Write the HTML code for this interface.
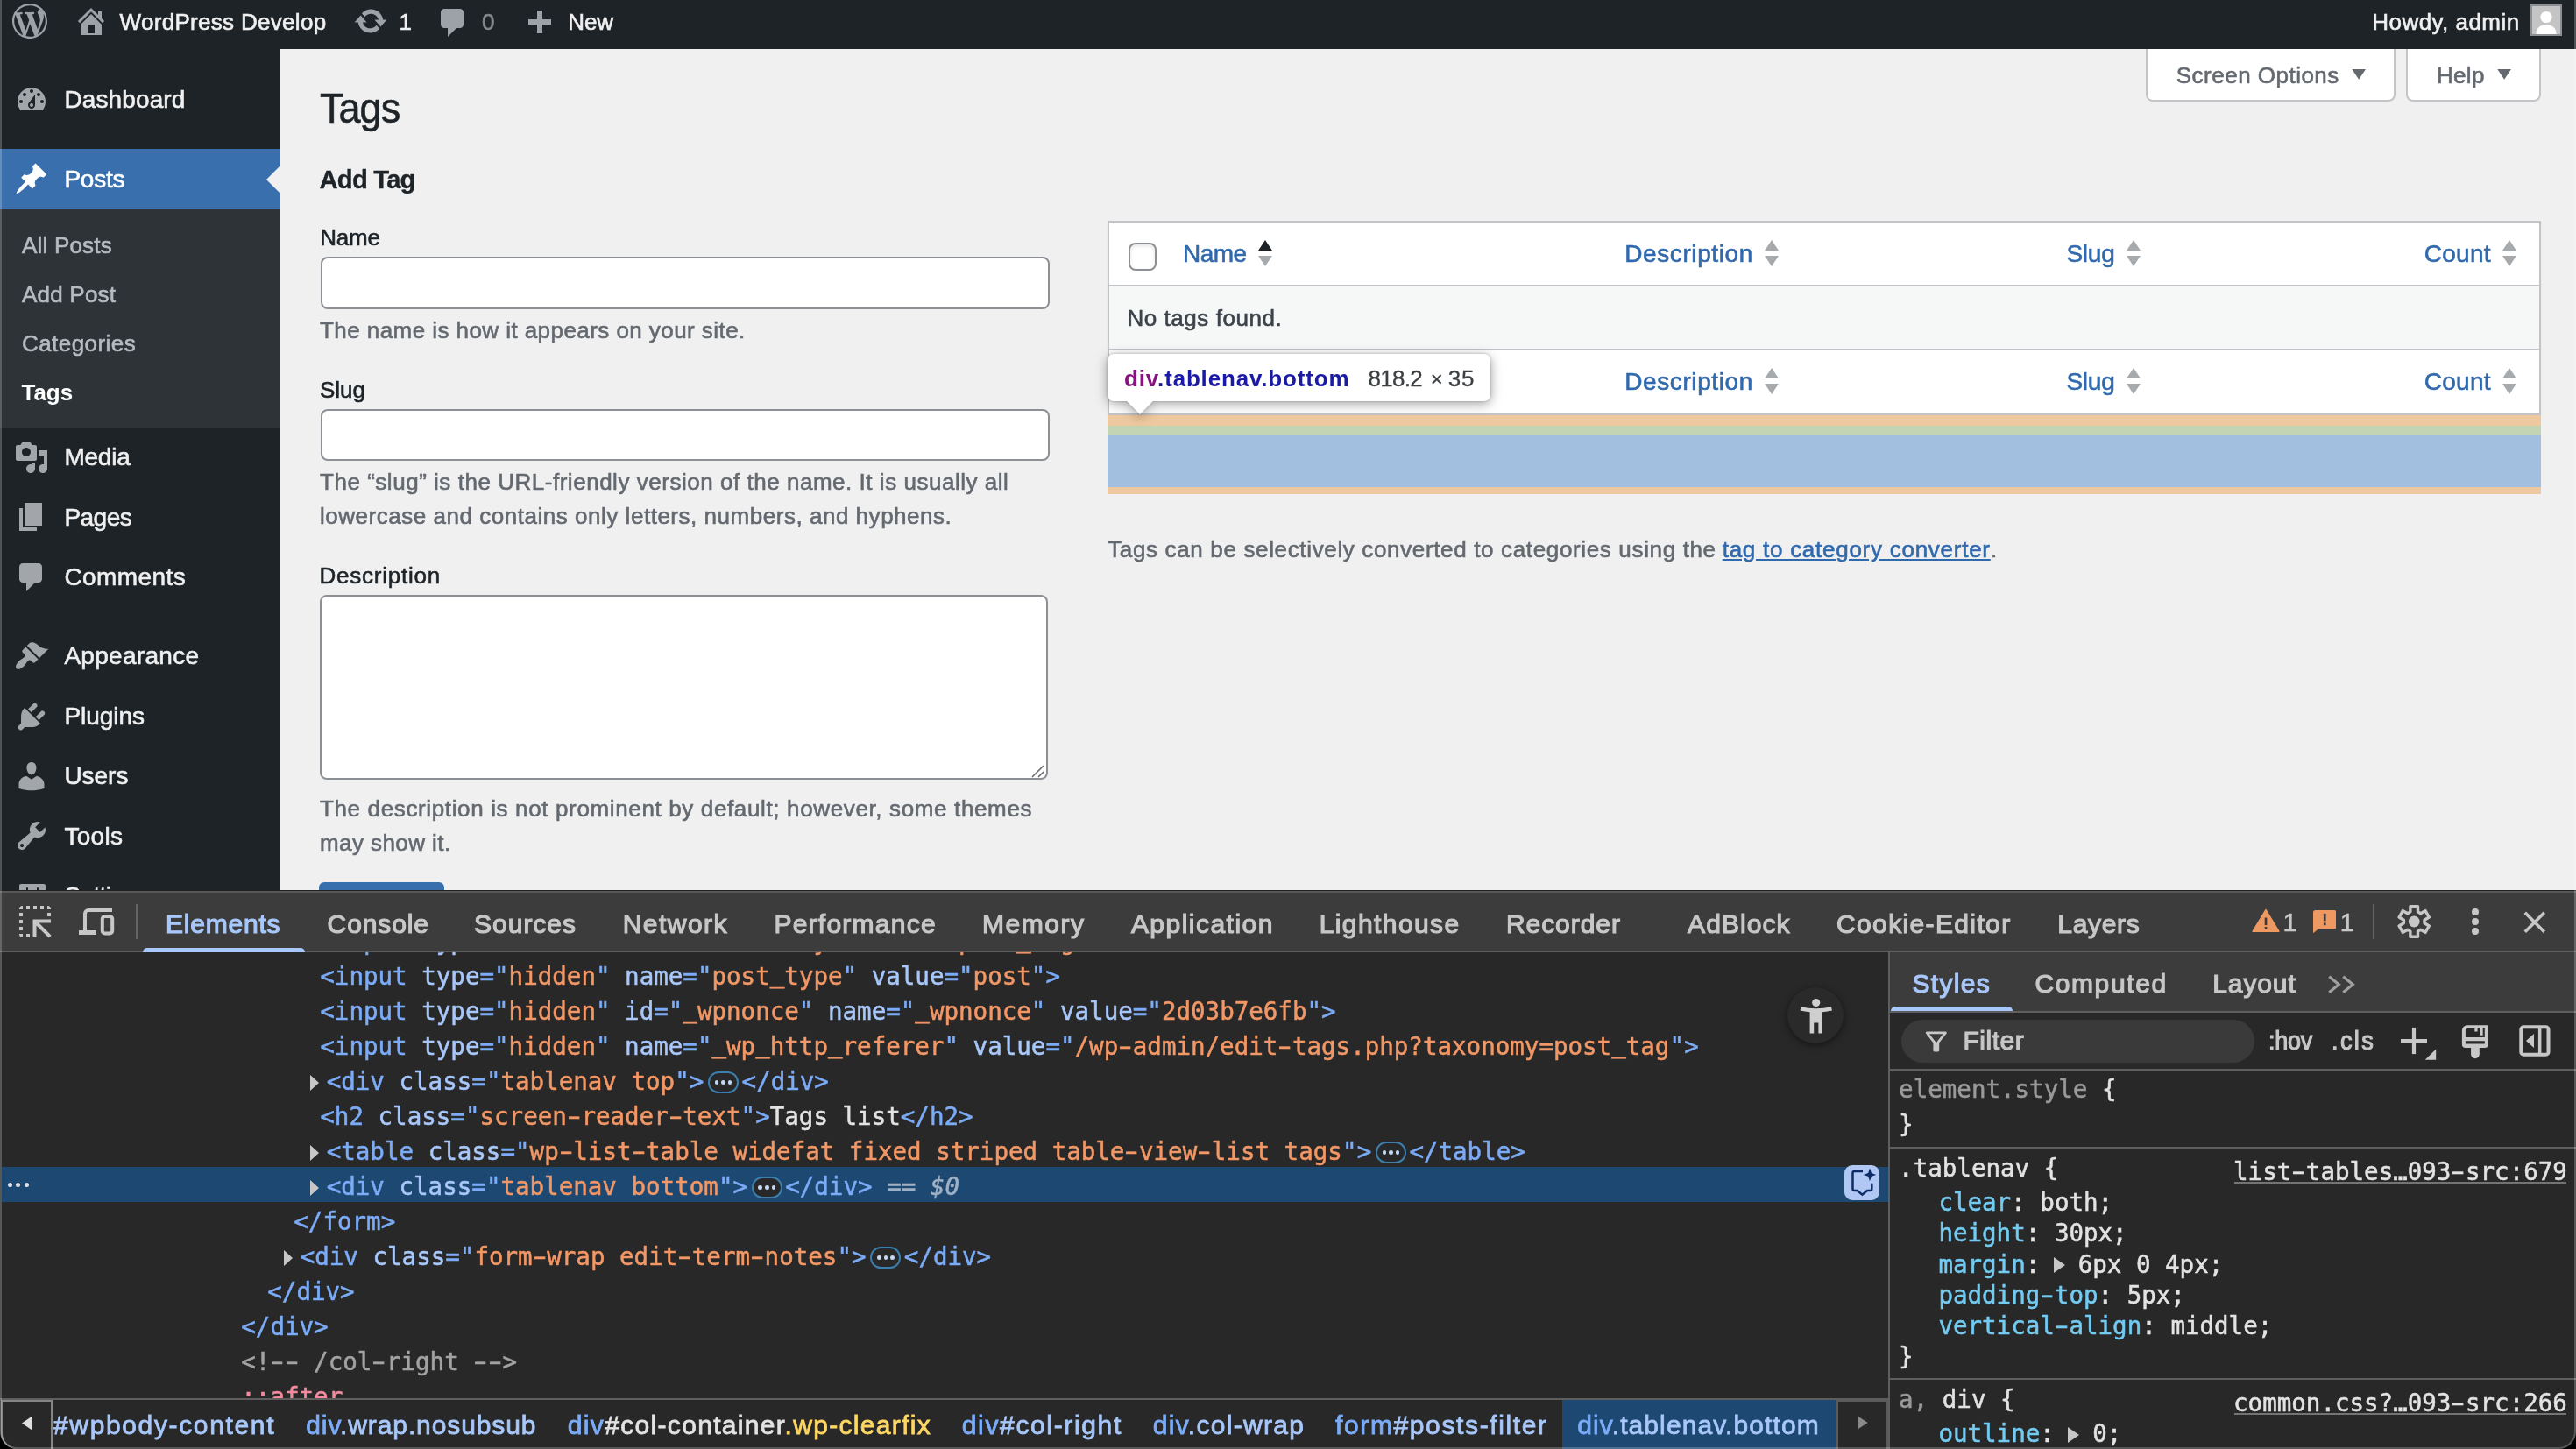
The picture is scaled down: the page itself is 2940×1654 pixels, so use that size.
<!DOCTYPE html>
<html lang="en"><head><meta charset="utf-8"><title>Tags ‹ WordPress Develop — WordPress</title>
<style>
html,body{margin:0;padding:0;}
body{width:2940px;height:1654px;overflow:hidden;position:relative;background:#f0f0f1;font-family:"Liberation Sans",sans-serif;}
.b{position:absolute;box-sizing:border-box;display:block;}
.t{position:absolute;white-space:pre;line-height:1;font-family:"Liberation Sans",sans-serif;}
.m{-webkit-text-stroke:0.5px;font-family:"DejaVu Sans Mono","Liberation Mono",monospace;}
.u{text-decoration:underline;}
.h{display:inline-block;transform:scaleX(1.65);}
.us{position:relative;top:-3px;}
#root{position:absolute;left:0;top:0;width:2940px;height:1654px;will-change:transform;}
</style></head>
<body>
<div id="root">
<div class="b" id="wp" style="left:0;top:0;width:2940px;height:1016px;overflow:hidden;background:#f0f0f1">
<div class="b" style="left:0px;top:56px;width:320px;height:960px;background:#1d2327;"></div>
<div class="b" style="left:0px;top:170.4px;width:320px;height:68.4px;background:#3a6fae;"></div>
<div class="b" style="left:0px;top:238.8px;width:320px;height:249.2px;background:#2d3337;"></div>
<div class="b" style="left:304px;top:188.600px;width:0;height:0;border:16px solid transparent;border-right-color:#f0f0f1;border-left-width:0"></div>
<svg class="b" style="left:16px;top:94px;" width="40" height="40" viewBox="0 0 20 20"><path fill="#a2a6ab" d="M3.76 16h12.48c1.1-1.37 1.76-3.11 1.76-5 0-4.42-3.58-8-8-8s-8 3.58-8 8c0 1.89.66 3.63 1.76 5zM10 4c.55 0 1 .45 1 1s-.45 1-1 1-1-.45-1-1 .45-1 1-1zM6 6c.55 0 1 .45 1 1s-.45 1-1 1-1-.45-1-1 .45-1 1-1zm8 0c.55 0 1 .45 1 1s-.45 1-1 1-1-.45-1-1 .45-1 1-1zm-5.37 5.55L12 7v6c0 1.1-.9 2-2 2s-2-.9-2-2c0-.57.24-1.08.63-1.45zM4 10c.55 0 1 .45 1 1s-.45 1-1 1-1-.45-1-1 .45-1 1-1zm12 0c.55 0 1 .45 1 1s-.45 1-1 1-1-.45-1-1 .45-1 1-1zm-5 3c0-.55-.45-1-1-1s-1 .45-1 1 .45 1 1 1 1-.45 1-1z"/></svg>
<span class="t" style="left:73.40px;top:100.20px;font-size:28px;color:#f0f0f1;letter-spacing:0.125px;-webkit-text-stroke:0.6px;">Dashboard</span>
<svg class="b" style="left:16px;top:184.4px;" width="40" height="40" viewBox="0 0 20 20"><path fill="#fff" d="M10.44 3.02l1.82-1.82 6.36 6.35-1.83 1.82c-1.05-.68-2.48-.57-3.41.36l-.75.75c-.92.93-1.04 2.35-.35 3.41l-1.83 1.82-2.41-2.41-2.8 2.79c-.42.42-3.38 2.71-3.8 2.29s1.86-3.39 2.28-3.81l2.79-2.79L4.1 9.36l1.83-1.82c1.05.69 2.48.57 3.4-.36l.75-.75c.93-.92 1.05-2.35.36-3.41z"/></svg>
<span class="t" style="left:73.40px;top:190.60px;font-size:28px;color:#fff;letter-spacing:-0.200px;-webkit-text-stroke:0.6px;">Posts</span>
<span class="t" style="left:25.00px;top:266.99px;font-size:26px;color:#b5bcc1;letter-spacing:0.200px;-webkit-text-stroke:0.6px;">All Posts</span>
<span class="t" style="left:25.00px;top:322.79px;font-size:26px;color:#b5bcc1;letter-spacing:0.214px;-webkit-text-stroke:0.6px;">Add Post</span>
<span class="t" style="left:25.00px;top:379.19px;font-size:26px;color:#b5bcc1;letter-spacing:0.444px;-webkit-text-stroke:0.6px;">Categories</span>
<span class="t" style="left:24.50px;top:434.99px;font-size:26px;color:#fff;letter-spacing:-0.033px;font-weight:700;">Tags</span>
<svg class="b" style="left:16px;top:502px;" width="40" height="40" viewBox="0 0 20 20"><path fill="#a2a6ab" d="M13 11V4c0-.55-.45-1-1-1h-1.67L9 1H5L3.67 3H2c-.55 0-1 .45-1 1v7c0 .55.45 1 1 1h10c.55 0 1-.45 1-1zM7 4.5c1.38 0 2.5 1.12 2.5 2.5S8.38 9.5 7 9.5 4.5 8.38 4.5 7 5.62 4.5 7 4.5zM14 6h5v10.5c0 1.38-1.12 2.5-2.5 2.5S14 17.88 14 16.5s1.12-2.500 2.5-2.500c.17 0 .34.02.5.05V9h-3V6zm-4 8.050V13h2v3.500c0 1.380-1.120 2.500-2.500 2.500S7 17.880 7 16.500 8.120 14 9.500 14c.170 0 .340.020.500.050z"/></svg>
<span class="t" style="left:73.40px;top:508.20px;font-size:28px;color:#f0f0f1;letter-spacing:-0.225px;-webkit-text-stroke:0.6px;">Media</span>
<svg class="b" style="left:16px;top:570.4px;" width="40" height="40" viewBox="0 0 20 20"><path fill="#a2a6ab" d="M6 15V2h10v13H6zm-1 1h8v2H3V5h2v11z"/></svg>
<span class="t" style="left:73.40px;top:576.60px;font-size:28px;color:#f0f0f1;letter-spacing:-0.525px;-webkit-text-stroke:0.6px;">Pages</span>
<svg class="b" style="left:16px;top:638.8px;" width="40" height="40" viewBox="0 0 20 20"><path fill="#a2a6ab" d="M5 2h9c1.1 0 2 .9 2 2v7c0 1.1-.9 2-2 2h-2l-5 5v-5H5c-1.1 0-2-.9-2-2V4c0-1.1.9-2 2-2z"/></svg>
<span class="t" style="left:73.40px;top:645.00px;font-size:28px;color:#f0f0f1;letter-spacing:0.414px;-webkit-text-stroke:0.6px;">Comments</span>
<svg class="b" style="left:16px;top:729.2px;" width="40" height="40" viewBox="0 0 20 20"><path fill="#a2a6ab" d="M14.48 11.06L7.41 3.99l1.5-1.5c.5-.56 2.3-.47 3.51.32 1.21.8 1.43 1.28 2.91 2.1 1.18.64 2.45 1.26 4.45.85zm-.71.71L6.7 4.7 4.93 6.47c-.39.39-.39 1.02 0 1.41l1.06 1.06c.39.39.39 1.03 0 1.42-.6.6-1.43 1.11-2.21 1.69-.35.26-.7.53-1.01.84C1.43 14.23.4 16.08 1.4 17.07c.99 1 2.84-.03 4.18-1.36.31-.31.58-.66.85-1.02.57-.78 1.08-1.61 1.69-2.21.39-.39 1.02-.39 1.41 0l1.06 1.06c.39.39 1.02.39 1.41 0z"/></svg>
<span class="t" style="left:73.40px;top:735.40px;font-size:28px;color:#f0f0f1;letter-spacing:0.289px;-webkit-text-stroke:0.6px;">Appearance</span>
<svg class="b" style="left:16px;top:797.6px;" width="40" height="40" viewBox="0 0 20 20"><path fill="#a2a6ab" d="M13.11 4.36L9.87 7.6 8 5.73l3.24-3.24c.35-.34 1.05-.2 1.56.32.52.51.66 1.21.31 1.55zm-8 1.77l.91-1.12 9.01 9.01-1.19.84c-.71.71-2.63 1.16-3.82 1.16H6.14L4.9 17.26c-.59.59-1.54.59-2.12 0-.59-.58-.59-1.53 0-2.12l1.24-1.24v-3.88c0-1.13.4-3.19 1.09-3.89zm7.26 3.97l3.24-3.24c.34-.35 1.04-.21 1.55.31.52.51.66 1.21.31 1.55l-3.24 3.25z"/></svg>
<span class="t" style="left:73.40px;top:803.80px;font-size:28px;color:#f0f0f1;letter-spacing:-0.033px;-webkit-text-stroke:0.6px;">Plugins</span>
<svg class="b" style="left:16px;top:866px;" width="40" height="40" viewBox="0 0 20 20"><path fill="#a2a6ab" d="M10 9.25c-2.27 0-2.73-3.44-2.73-3.44C7 4.02 7.82 2 9.97 2c2.16 0 2.98 2.02 2.71 3.81 0 0-.41 3.44-2.68 3.44zm0 2.57L12.72 10c2.39 0 4.52 2.33 4.52 4.53v2.49s-3.65 1.13-7.24 1.13c-3.65 0-7.24-1.13-7.24-1.13v-2.49c0-2.25 1.94-4.48 4.47-4.48z"/></svg>
<span class="t" style="left:73.40px;top:872.20px;font-size:28px;color:#f0f0f1;letter-spacing:-0.025px;-webkit-text-stroke:0.6px;">Users</span>
<svg class="b" style="left:16px;top:934.4px;" width="40" height="40" viewBox="0 0 20 20"><path fill="#a2a6ab" d="M16.68 9.77c-1.34 1.34-3.3 1.67-4.95.99l-5.41 6.52c-.99.99-2.59.99-3.58 0s-.99-2.59 0-3.57l6.52-5.42c-.68-1.65-.35-3.61.99-4.95 1.28-1.28 3.12-1.62 4.72-1.060l-2.890 2.890 2.820 2.820 2.860-2.870c.53 1.580.180 3.390-1.080 4.650zM3.810 16.210c.4.39 1.040.39 1.430 0 .4-.4.4-1.040 0-1.430-.39-.4-1.030-.4-1.430 0-.39.39-.39 1.030 0 1.430z"/></svg>
<span class="t" style="left:73.40px;top:940.60px;font-size:28px;color:#f0f0f1;letter-spacing:0.325px;-webkit-text-stroke:0.6px;">Tools</span>
<svg class="b" style="left:16px;top:1002.8px;" width="40" height="40" viewBox="0 0 20 20"><path fill="#a2a6ab" d="M18 16V4c0-.55-.45-1-1-1H4c-.55 0-1 .45-1 1v12c0 .55.45 1 1 1h13c.55 0 1-.45 1-1zM8 11h1c.55 0 1 .45 1 1s-.45 1-1 1H8v1.500c0 .28-.22.5-.5.5s-.5-.22-.5-.5V13H6c-.55 0-1-.45-1-1s.45-1 1-1h1V5.500c0-.28.22-.5.5-.5s.5.22.5.5V11zm5-2h-1c-.55 0-1-.45-1-1s.45-1 1-1h1V5.500c0-.28.22-.5.5-.5s.5.22.5.5V7h1c.55 0 1 .45 1 1s-.45 1-1 1h-1v5.500c0 .28-.22.5-.5.5s-.5-.22-.5-.5V9z"/></svg>
<span class="t" style="left:73.40px;top:1009.00px;font-size:28px;color:#f0f0f1;letter-spacing:-0.629px;-webkit-text-stroke:0.6px;">Settings</span>
<div class="b" style="left:0px;top:0px;width:2940px;height:56px;background:#1d2327;"></div>
<svg class="b" style="left:14px;top:4px;" width="40" height="40" viewBox="0 0 20 20"><path fill="#9ca2a7" d="M20 10c0-5.51-4.49-10-10-10C4.48 0 0 4.49 0 10c0 5.52 4.48 10 10 10 5.51 0 10-4.48 10-10zM7.78 15.37L4.37 6.22c.55-.02 1.17-.08 1.17-.08.5-.06.44-1.13-.06-1.11 0 0-1.45.11-2.37.11-.18 0-.37 0-.58-.01C4.12 2.69 6.87 1.11 10 1.11c2.33 0 4.45.87 6.05 2.34-.68-.11-1.65.39-1.65 1.58 0 .74.45 1.36.9 2.1.35.61.55 1.36.55 2.46 0 1.49-1.4 5-1.4 5l-3.03-8.37c.54-.02.82-.17.82-.17.5-.05.44-1.25-.06-1.22 0 0-1.44.12-2.38.12-.87 0-2.33-.12-2.33-.12-.5-.03-.56 1.2-.06 1.22l.92.08 1.26 3.41zM17.41 10c.24-.64.74-1.87.43-4.25.7 1.29 1.05 2.71 1.05 4.25 0 3.29-1.73 6.24-4.4 7.78.97-2.59 1.94-5.2 2.92-7.78zM6.1 18.09C3.12 16.65 1.11 13.53 1.11 10c0-1.3.23-2.48.72-3.59C3.25 10.3 4.67 14.2 6.1 18.09zm4.03-6.63l2.58 6.98c-.86.29-1.76.45-2.71.45-.79 0-1.57-.11-2.29-.33.81-2.38 1.62-4.74 2.42-7.1z"/></svg>
<svg class="b" style="left:84px;top:4px;" width="40" height="40" viewBox="0 0 20 20"><path fill="#9ca2a7" d="M16 8.5l1.53 1.53-1.06 1.06L10 4.62l-6.47 6.47-1.06-1.06L10 2.5l4 4v-2h2v4zm-6-2.46l6 5.99V18H4v-5.97zM12 17v-5H8v5h4z"/></svg>
<span class="t" style="left:136.60px;top:11.99px;font-size:26px;color:#f0f0f1;letter-spacing:0.300px;-webkit-text-stroke:0.6px;">WordPress Develop</span>
<svg class="b" style="left:402.6px;top:4px;" width="40" height="40" viewBox="0 0 20 20"><path fill="#9ca2a7" d="M10.2 3.28c3.53 0 6.43 2.61 6.92 6h2.08l-3.5 4-3.5-4h2.32c-.45-1.97-2.21-3.45-4.32-3.45-1.45 0-2.73.71-3.54 1.78L4.95 5.66C6.23 4.2 8.11 3.28 10.2 3.28zm-.4 13.44c-3.52 0-6.43-2.61-6.92-6H.8l3.5-4c1.17 1.33 2.33 2.67 3.5 4H5.48c.45 1.97 2.21 3.45 4.32 3.45 1.45 0 2.73-.71 3.54-1.78l1.71 1.95c-1.28 1.46-3.15 2.38-5.25 2.38z"/></svg>
<span class="t" style="left:455.50px;top:11.99px;font-size:26px;color:#f0f0f1;-webkit-text-stroke:0.6px;">1</span>
<svg class="b" style="left:497px;top:6px;" width="40" height="40" viewBox="0 0 20 20"><path fill="#9ca2a7" d="M5 2h9c1.1 0 2 .9 2 2v7c0 1.1-.9 2-2 2h-2l-5 5v-5H5c-1.1 0-2-.9-2-2V4c0-1.1.9-2 2-2z"/></svg>
<span class="t" style="left:550.00px;top:11.99px;font-size:26px;color:#86898c;-webkit-text-stroke:0.6px;">0</span>
<svg class="b" style="left:595px;top:8px;" width="40" height="40" viewBox="0 0 20 20"><path fill="#9ca2a7" d="M17 7v3h-5v5H9v-5H4V7h5V2h3v5h5z"/></svg>
<span class="t" style="left:648.30px;top:11.99px;font-size:26px;color:#f0f0f1;letter-spacing:-0.150px;-webkit-text-stroke:0.6px;">New</span>
<span class="t" style="left:2707.30px;top:11.99px;font-size:26px;color:#f0f0f1;letter-spacing:0.455px;-webkit-text-stroke:0.6px;">Howdy, admin</span>
<div class="b" style="left:2888px;top:5px;width:36px;height:36px;background:#c4c4c4;border:2px solid #8c8f94;overflow:hidden"><svg width="32" height="32" viewBox="0 0 32 32" style="display:block"><circle cx="16" cy="12.5" r="6.6" fill="#fff"/><path fill="#fff" d="M4.5 32c0-7 4.6-11 11.500-11s11.500 4 11.500 11z"/></svg></div>
<div class="b" style="left:2449px;top:56px;width:285px;height:60px;background:#fff;border:2px solid #c3c4c7;border-top:none;border-radius:0 0 8px 8px"></div>
<span class="t" style="left:2483.80px;top:72.79px;font-size:26px;color:#646970;letter-spacing:0.485px;-webkit-text-stroke:0.6px;">Screen Options</span>
<svg class="b" style="left:2684px;top:78.8px;" width="16.3" height="11.8" viewBox="0 0 16 12"><path fill="#646970" d="M0 0h16L8 12z"/></svg>
<div class="b" style="left:2746px;top:56px;width:154px;height:60px;background:#fff;border:2px solid #c3c4c7;border-top:none;border-radius:0 0 8px 8px"></div>
<span class="t" style="left:2780.90px;top:72.79px;font-size:26px;color:#646970;letter-spacing:0.333px;-webkit-text-stroke:0.6px;">Help</span>
<svg class="b" style="left:2849.8px;top:78.8px;" width="16.3" height="11.8" viewBox="0 0 16 12"><path fill="#646970" d="M0 0h16L8 12z"/></svg>
<span class="t" style="left:365.00px;top:98.94px;font-size:48.5px;color:#1d2327;letter-spacing:-1.097px;-webkit-text-stroke:0.6px;transform:scaleX(0.93);transform-origin:0 0;">Tags</span>
<span class="t" style="left:364.50px;top:190.40px;font-size:29.3px;color:#1d2327;letter-spacing:-0.833px;font-weight:700;-webkit-text-stroke:0.3px;">Add Tag</span>
<span class="t" style="left:365.20px;top:258.19px;font-size:26px;color:#1d2327;letter-spacing:-0.233px;-webkit-text-stroke:0.6px;">Name</span>
<div class="b" style="left:366px;top:293px;width:832px;height:60px;background:#fff;border:2px solid #8c8f94;border-radius:8px"></div>
<span class="t" style="left:365.00px;top:363.99px;font-size:26px;color:#646970;letter-spacing:0.436px;-webkit-text-stroke:0.6px;">The name is how it appears on your site.</span>
<span class="t" style="left:365.00px;top:431.79px;font-size:26px;color:#1d2327;letter-spacing:-0.033px;-webkit-text-stroke:0.6px;">Slug</span>
<div class="b" style="left:366px;top:466.5px;width:832px;height:59.4px;background:#fff;border:2px solid #8c8f94;border-radius:8px"></div>
<span class="t" style="left:365.00px;top:536.99px;font-size:26px;color:#646970;letter-spacing:0.528px;-webkit-text-stroke:0.6px;">The “slug” is the URL-friendly version of the name. It is usually all</span>
<span class="t" style="left:365.00px;top:575.99px;font-size:26px;color:#646970;letter-spacing:0.526px;-webkit-text-stroke:0.6px;">lowercase and contains only letters, numbers, and hyphens.</span>
<span class="t" style="left:364.50px;top:644.29px;font-size:26px;color:#1d2327;letter-spacing:0.770px;-webkit-text-stroke:0.6px;">Description</span>
<div class="b" style="left:364.5px;top:678.5px;width:831px;height:211px;background:#fff;border:2px solid #8c8f94;border-radius:8px"></div>
<svg class="b" style="left:1176px;top:872px;" width="16" height="16" viewBox="0 0 16 16"><path d="M2 15L15 2M9 15l6-6" stroke="#6b6b6b" stroke-width="1.6" fill="none"/></svg>
<span class="t" style="left:365.00px;top:909.99px;font-size:26px;color:#646970;letter-spacing:0.637px;-webkit-text-stroke:0.6px;">The description is not prominent by default; however, some themes</span>
<span class="t" style="left:365.00px;top:949.09px;font-size:26px;color:#646970;letter-spacing:0.427px;-webkit-text-stroke:0.6px;">may show it.</span>
<div class="b" style="left:364px;top:1007px;width:143px;height:64px;background:#3a6fae;border-radius:6px"></div>
<span class="t" style="left:392.00px;top:1025.99px;font-size:26px;color:#fff;-webkit-text-stroke:0.6px;">Add Tag</span>
<div class="b" style="left:1264px;top:252px;width:1636px;height:222px;background:#fff;border:2px solid #c3c4c7;box-shadow:0 2px 2px rgba(0,0,0,.04)"></div>
<div class="b" style="left:1266px;top:325px;width:1632px;height:2px;background:#c3c4c7;"></div>
<div class="b" style="left:1266px;top:327px;width:1632px;height:71px;background:#f6f7f7;"></div>
<div class="b" style="left:1266px;top:398px;width:1632px;height:2px;background:#c3c4c7;"></div>
<div class="b" style="left:1288px;top:277px;width:32px;height:32px;background:#fff;border:2px solid #8c8f94;border-radius:8px;box-shadow:inset 0 2px 4px rgba(0,0,0,.1)"></div>
<span class="t" style="left:1350.00px;top:275.50px;font-size:28px;color:#3169ad;letter-spacing:-0.567px;-webkit-text-stroke:0.6px;">Name</span>
<svg class="b" style="left:1436.3px;top:274px;" width="16" height="30" viewBox="0 0 16 30"><path fill="#1d2327" d="M8 0l8 12H0z"/><path fill="#a7aaad" d="M0 18h16L8 30z"/></svg>
<span class="t" style="left:1854.20px;top:275.50px;font-size:28px;color:#3169ad;letter-spacing:0.610px;-webkit-text-stroke:0.6px;">Description</span>
<svg class="b" style="left:2014px;top:274px;" width="16" height="30" viewBox="0 0 16 30"><path fill="#a7aaad" d="M8 0l8 12H0z"/><path fill="#a7aaad" d="M0 18h16L8 30z"/></svg>
<span class="t" style="left:2358.40px;top:275.50px;font-size:28px;color:#3169ad;letter-spacing:-0.233px;-webkit-text-stroke:0.6px;">Slug</span>
<svg class="b" style="left:2427.2px;top:274px;" width="16" height="30" viewBox="0 0 16 30"><path fill="#a7aaad" d="M8 0l8 12H0z"/><path fill="#a7aaad" d="M0 18h16L8 30z"/></svg>
<span class="t" style="left:2766.70px;top:275.50px;font-size:28px;color:#3169ad;letter-spacing:0.275px;-webkit-text-stroke:0.6px;">Count</span>
<svg class="b" style="left:2855.8px;top:274px;" width="16" height="30" viewBox="0 0 16 30"><path fill="#a7aaad" d="M8 0l8 12H0z"/><path fill="#a7aaad" d="M0 18h16L8 30z"/></svg>
<span class="t" style="left:1286.50px;top:349.99px;font-size:26px;color:#3c434a;letter-spacing:0.538px;-webkit-text-stroke:0.6px;">No tags found.</span>
<span class="t" style="left:1350.00px;top:421.60px;font-size:28px;color:#3169ad;letter-spacing:-0.567px;-webkit-text-stroke:0.6px;">Name</span>
<svg class="b" style="left:1436.3px;top:420px;" width="16" height="30" viewBox="0 0 16 30"><path fill="#1d2327" d="M8 0l8 12H0z"/><path fill="#a7aaad" d="M0 18h16L8 30z"/></svg>
<span class="t" style="left:1854.20px;top:421.60px;font-size:28px;color:#3169ad;letter-spacing:0.610px;-webkit-text-stroke:0.6px;">Description</span>
<svg class="b" style="left:2014px;top:420px;" width="16" height="30" viewBox="0 0 16 30"><path fill="#a7aaad" d="M8 0l8 12H0z"/><path fill="#a7aaad" d="M0 18h16L8 30z"/></svg>
<span class="t" style="left:2358.40px;top:421.60px;font-size:28px;color:#3169ad;letter-spacing:-0.233px;-webkit-text-stroke:0.6px;">Slug</span>
<svg class="b" style="left:2427.2px;top:420px;" width="16" height="30" viewBox="0 0 16 30"><path fill="#a7aaad" d="M8 0l8 12H0z"/><path fill="#a7aaad" d="M0 18h16L8 30z"/></svg>
<span class="t" style="left:2766.70px;top:421.60px;font-size:28px;color:#3169ad;letter-spacing:0.275px;-webkit-text-stroke:0.6px;">Count</span>
<svg class="b" style="left:2855.8px;top:420px;" width="16" height="30" viewBox="0 0 16 30"><path fill="#a7aaad" d="M8 0l8 12H0z"/><path fill="#a7aaad" d="M0 18h16L8 30z"/></svg>
<div class="b" style="left:1288px;top:423px;width:32px;height:32px;background:#fff;border:2px solid #8c8f94;border-radius:8px;box-shadow:inset 0 2px 4px rgba(0,0,0,.1)"></div>
<div class="b" style="left:1264px;top:474px;width:1636px;height:12px;background:#eec89e;"></div>
<div class="b" style="left:1264px;top:486px;width:1636px;height:10px;background:#c2d4b4;"></div>
<div class="b" style="left:1264px;top:496px;width:1636px;height:60px;background:#a3bfe0;"></div>
<div class="b" style="left:1264px;top:556px;width:1636px;height:8px;background:#eec89e;"></div>
<div class="b" style="left:0;top:0;width:2940px;height:1016px;filter:drop-shadow(0 3px 7px rgba(0,0,0,.30)) drop-shadow(0 0 1.500px rgba(0,0,0,.25))">
<div class="b" style="left:1264px;top:404px;width:437px;height:54px;background:#fff;border-radius:7px"></div>
<svg class="b" style="left:1284px;top:456px;" width="34" height="18" viewBox="0 0 34 18"><path fill="#fff" d="M0 0h34L17 17z"/></svg>
</div>
<span class="t" style="left:1283.00px;top:418.99px;font-size:26px;letter-spacing:0.822px;font-weight:700;"><span style="color:#881280">div</span><span style="color:#1a1aa6">.tablenav.bottom</span></span>
<span class="t" style="left:1561.50px;top:418.99px;font-size:26px;color:#3c4043;letter-spacing:-0.725px;-webkit-text-stroke:0.3px;">818.2</span>
<span class="t" style="left:1632.80px;top:420.68px;font-size:24px;color:#3c4043;-webkit-text-stroke:0.3px;">×</span>
<span class="t" style="left:1652.80px;top:418.99px;font-size:26px;color:#3c4043;letter-spacing:0.700px;-webkit-text-stroke:0.3px;">35</span>
<span class="t" style="left:1264.20px;top:614.29px;font-size:26px;color:#646970;letter-spacing:0.648px;-webkit-text-stroke:0.6px;">Tags can be selectively converted to categories using the</span>
<span class="t u" style="left:1965.70px;top:614.29px;font-size:26px;color:#3169ad;letter-spacing:0.738px;-webkit-text-stroke:0.6px;">tag to category converter</span>
<span class="t" style="left:2272.00px;top:614.29px;font-size:26px;color:#646970;-webkit-text-stroke:0.6px;">.</span>
</div>
<div class="b" id="dt" style="left:0;top:1016px;width:2940px;height:638px;background:#282828;overflow:hidden"></div>
<div class="b" style="left:0px;top:1016px;width:2940px;height:1px;background:#1f1f1f;"></div>
<div class="b" style="left:0px;top:1017px;width:2940px;height:2px;background:#575757;"></div>
<div class="b" style="left:0px;top:1019px;width:2940px;height:66px;background:#3c3c3c;"></div>
<div class="b" style="left:2px;top:1332px;width:2153px;height:40px;background:#1d4872;"></div>
<span class="t m" style="left:365.30px;top:1061.33px;font-size:27.5px;color:#7cacf8;">&lt;input</span>
<span class="t m" style="left:464.68px;top:1061.33px;font-size:27.5px;color:#7cacf8;"> </span>
<span class="t m" style="left:481.24px;top:1061.33px;font-size:27.5px;color:#a8c7fa;">type</span>
<span class="t m" style="left:547.49px;top:1061.33px;font-size:27.5px;color:#7cacf8;">="</span>
<span class="t m" style="left:580.61px;top:1061.33px;font-size:27.5px;color:#f29766;">hidden</span>
<span class="t m" style="left:679.99px;top:1061.33px;font-size:27.5px;color:#7cacf8;">"</span>
<span class="t m" style="left:696.55px;top:1061.33px;font-size:27.5px;color:#7cacf8;"> </span>
<span class="t m" style="left:713.11px;top:1061.33px;font-size:27.5px;color:#a8c7fa;">name</span>
<span class="t m" style="left:779.36px;top:1061.33px;font-size:27.5px;color:#7cacf8;">="</span>
<span class="t m" style="left:812.49px;top:1061.33px;font-size:27.5px;color:#f29766;">taxonomy</span>
<span class="t m" style="left:944.99px;top:1061.33px;font-size:27.5px;color:#7cacf8;">"</span>
<span class="t m" style="left:961.55px;top:1061.33px;font-size:27.5px;color:#7cacf8;"> </span>
<span class="t m" style="left:978.11px;top:1061.33px;font-size:27.5px;color:#a8c7fa;">value</span>
<span class="t m" style="left:1060.92px;top:1061.33px;font-size:27.5px;color:#7cacf8;">="</span>
<span class="t m" style="left:1094.05px;top:1061.33px;font-size:27.5px;color:#f29766;">post<span class="us">_</span>tag</span>
<span class="t m" style="left:1226.55px;top:1061.33px;font-size:27.5px;color:#7cacf8;">"</span>
<span class="t m" style="left:1243.11px;top:1061.33px;font-size:27.5px;color:#7cacf8;">&gt;</span>
<span class="t m" style="left:365.30px;top:1101.33px;font-size:27.5px;color:#7cacf8;">&lt;input</span>
<span class="t m" style="left:464.68px;top:1101.33px;font-size:27.5px;color:#7cacf8;"> </span>
<span class="t m" style="left:481.24px;top:1101.33px;font-size:27.5px;color:#a8c7fa;">type</span>
<span class="t m" style="left:547.49px;top:1101.33px;font-size:27.5px;color:#7cacf8;">="</span>
<span class="t m" style="left:580.61px;top:1101.33px;font-size:27.5px;color:#f29766;">hidden</span>
<span class="t m" style="left:679.99px;top:1101.33px;font-size:27.5px;color:#7cacf8;">"</span>
<span class="t m" style="left:696.55px;top:1101.33px;font-size:27.5px;color:#7cacf8;"> </span>
<span class="t m" style="left:713.11px;top:1101.33px;font-size:27.5px;color:#a8c7fa;">name</span>
<span class="t m" style="left:779.36px;top:1101.33px;font-size:27.5px;color:#7cacf8;">="</span>
<span class="t m" style="left:812.49px;top:1101.33px;font-size:27.5px;color:#f29766;">post<span class="us">_</span>type</span>
<span class="t m" style="left:961.55px;top:1101.33px;font-size:27.5px;color:#7cacf8;">"</span>
<span class="t m" style="left:978.11px;top:1101.33px;font-size:27.5px;color:#7cacf8;"> </span>
<span class="t m" style="left:994.67px;top:1101.33px;font-size:27.5px;color:#a8c7fa;">value</span>
<span class="t m" style="left:1077.49px;top:1101.33px;font-size:27.5px;color:#7cacf8;">="</span>
<span class="t m" style="left:1110.61px;top:1101.33px;font-size:27.5px;color:#f29766;">post</span>
<span class="t m" style="left:1176.86px;top:1101.33px;font-size:27.5px;color:#7cacf8;">"</span>
<span class="t m" style="left:1193.42px;top:1101.33px;font-size:27.5px;color:#7cacf8;">&gt;</span>
<span class="t m" style="left:365.30px;top:1141.33px;font-size:27.5px;color:#7cacf8;">&lt;input</span>
<span class="t m" style="left:464.68px;top:1141.33px;font-size:27.5px;color:#7cacf8;"> </span>
<span class="t m" style="left:481.24px;top:1141.33px;font-size:27.5px;color:#a8c7fa;">type</span>
<span class="t m" style="left:547.49px;top:1141.33px;font-size:27.5px;color:#7cacf8;">="</span>
<span class="t m" style="left:580.61px;top:1141.33px;font-size:27.5px;color:#f29766;">hidden</span>
<span class="t m" style="left:679.99px;top:1141.33px;font-size:27.5px;color:#7cacf8;">"</span>
<span class="t m" style="left:696.55px;top:1141.33px;font-size:27.5px;color:#7cacf8;"> </span>
<span class="t m" style="left:713.11px;top:1141.33px;font-size:27.5px;color:#a8c7fa;">id</span>
<span class="t m" style="left:746.24px;top:1141.33px;font-size:27.5px;color:#7cacf8;">="</span>
<span class="t m" style="left:779.36px;top:1141.33px;font-size:27.5px;color:#f29766;"><span class="us">_</span>wpnonce</span>
<span class="t m" style="left:911.86px;top:1141.33px;font-size:27.5px;color:#7cacf8;">"</span>
<span class="t m" style="left:928.42px;top:1141.33px;font-size:27.5px;color:#7cacf8;"> </span>
<span class="t m" style="left:944.99px;top:1141.33px;font-size:27.5px;color:#a8c7fa;">name</span>
<span class="t m" style="left:1011.24px;top:1141.33px;font-size:27.5px;color:#7cacf8;">="</span>
<span class="t m" style="left:1044.36px;top:1141.33px;font-size:27.5px;color:#f29766;"><span class="us">_</span>wpnonce</span>
<span class="t m" style="left:1176.86px;top:1141.33px;font-size:27.5px;color:#7cacf8;">"</span>
<span class="t m" style="left:1193.42px;top:1141.33px;font-size:27.5px;color:#7cacf8;"> </span>
<span class="t m" style="left:1209.99px;top:1141.33px;font-size:27.5px;color:#a8c7fa;">value</span>
<span class="t m" style="left:1292.80px;top:1141.33px;font-size:27.5px;color:#7cacf8;">="</span>
<span class="t m" style="left:1325.92px;top:1141.33px;font-size:27.5px;color:#f29766;">2d03b7e6fb</span>
<span class="t m" style="left:1491.55px;top:1141.33px;font-size:27.5px;color:#7cacf8;">"</span>
<span class="t m" style="left:1508.11px;top:1141.33px;font-size:27.5px;color:#7cacf8;">&gt;</span>
<span class="t m" style="left:365.30px;top:1181.33px;font-size:27.5px;color:#7cacf8;">&lt;input</span>
<span class="t m" style="left:464.68px;top:1181.33px;font-size:27.5px;color:#7cacf8;"> </span>
<span class="t m" style="left:481.24px;top:1181.33px;font-size:27.5px;color:#a8c7fa;">type</span>
<span class="t m" style="left:547.49px;top:1181.33px;font-size:27.5px;color:#7cacf8;">="</span>
<span class="t m" style="left:580.61px;top:1181.33px;font-size:27.5px;color:#f29766;">hidden</span>
<span class="t m" style="left:679.99px;top:1181.33px;font-size:27.5px;color:#7cacf8;">"</span>
<span class="t m" style="left:696.55px;top:1181.33px;font-size:27.5px;color:#7cacf8;"> </span>
<span class="t m" style="left:713.11px;top:1181.33px;font-size:27.5px;color:#a8c7fa;">name</span>
<span class="t m" style="left:779.36px;top:1181.33px;font-size:27.5px;color:#7cacf8;">="</span>
<span class="t m" style="left:812.49px;top:1181.33px;font-size:27.5px;color:#f29766;"><span class="us">_</span>wp<span class="us">_</span>http<span class="us">_</span>referer</span>
<span class="t m" style="left:1077.49px;top:1181.33px;font-size:27.5px;color:#7cacf8;">"</span>
<span class="t m" style="left:1094.05px;top:1181.33px;font-size:27.5px;color:#7cacf8;"> </span>
<span class="t m" style="left:1110.61px;top:1181.33px;font-size:27.5px;color:#a8c7fa;">value</span>
<span class="t m" style="left:1193.42px;top:1181.33px;font-size:27.5px;color:#7cacf8;">="</span>
<span class="t m" style="left:1226.55px;top:1181.33px;font-size:27.5px;color:#f29766;">/wp<span class="h">-</span>admin/edit<span class="h">-</span>tags.php?taxonomy=post<span class="us">_</span>tag</span>
<span class="t m" style="left:1905.61px;top:1181.33px;font-size:27.5px;color:#7cacf8;">"</span>
<span class="t m" style="left:1922.17px;top:1181.33px;font-size:27.5px;color:#7cacf8;">&gt;</span>
<svg class="b" style="left:353.5px;top:1227.3px;" width="10" height="18" viewBox="0 0 10 18"><path fill="#c7c7c7" d="M0 0l10 9L0 18z"/></svg>
<span class="t m" style="left:372.70px;top:1221.33px;font-size:27.5px;color:#7cacf8;">&lt;div</span>
<span class="t m" style="left:438.95px;top:1221.33px;font-size:27.5px;color:#7cacf8;"> </span>
<span class="t m" style="left:455.51px;top:1221.33px;font-size:27.5px;color:#a8c7fa;">class</span>
<span class="t m" style="left:538.33px;top:1221.33px;font-size:27.5px;color:#7cacf8;">="</span>
<span class="t m" style="left:571.45px;top:1221.33px;font-size:27.5px;color:#f29766;">tablenav top</span>
<span class="t m" style="left:770.20px;top:1221.33px;font-size:27.5px;color:#7cacf8;">"</span>
<span class="t m" style="left:786.76px;top:1221.33px;font-size:27.5px;color:#7cacf8;">&gt;</span>
<div class="b" style="left:808.0250000000001px;top:1223.0px;width:35px;height:24.6px;background:#282828;border:2px solid #3b7fae;border-radius:12.3px"></div>
<div class="b" style="left:815.6250000000001px;top:1233.3999999999999px;width:4.6px;height:4.6px;background:#c4d7f5;border-radius:50%"></div>
<div class="b" style="left:823.2250000000001px;top:1233.3999999999999px;width:4.6px;height:4.6px;background:#c4d7f5;border-radius:50%"></div>
<div class="b" style="left:830.8250000000002px;top:1233.3999999999999px;width:4.6px;height:4.6px;background:#c4d7f5;border-radius:50%"></div>
<span class="t m" style="left:846.53px;top:1221.33px;font-size:27.5px;color:#7cacf8;">&lt;/div&gt;</span>
<span class="t m" style="left:365.30px;top:1261.33px;font-size:27.5px;color:#7cacf8;">&lt;h2</span>
<span class="t m" style="left:414.99px;top:1261.33px;font-size:27.5px;color:#7cacf8;"> </span>
<span class="t m" style="left:431.55px;top:1261.33px;font-size:27.5px;color:#a8c7fa;">class</span>
<span class="t m" style="left:514.36px;top:1261.33px;font-size:27.5px;color:#7cacf8;">="</span>
<span class="t m" style="left:547.49px;top:1261.33px;font-size:27.5px;color:#f29766;">screen<span class="h">-</span>reader<span class="h">-</span>text</span>
<span class="t m" style="left:845.61px;top:1261.33px;font-size:27.5px;color:#7cacf8;">"</span>
<span class="t m" style="left:862.17px;top:1261.33px;font-size:27.5px;color:#7cacf8;">&gt;</span>
<span class="t m" style="left:878.74px;top:1261.33px;font-size:27.5px;color:#e3e3e3;">Tags list</span>
<span class="t m" style="left:1027.80px;top:1261.33px;font-size:27.5px;color:#7cacf8;">&lt;/h2&gt;</span>
<svg class="b" style="left:353.5px;top:1307.3px;" width="10" height="18" viewBox="0 0 10 18"><path fill="#c7c7c7" d="M0 0l10 9L0 18z"/></svg>
<span class="t m" style="left:372.70px;top:1301.33px;font-size:27.5px;color:#7cacf8;">&lt;table</span>
<span class="t m" style="left:472.07px;top:1301.33px;font-size:27.5px;color:#7cacf8;"> </span>
<span class="t m" style="left:488.64px;top:1301.33px;font-size:27.5px;color:#a8c7fa;">class</span>
<span class="t m" style="left:571.45px;top:1301.33px;font-size:27.5px;color:#7cacf8;">="</span>
<span class="t m" style="left:604.58px;top:1301.33px;font-size:27.5px;color:#f29766;">wp<span class="h">-</span>list<span class="h">-</span>table widefat fixed striped table<span class="h">-</span>view<span class="h">-</span>list tags</span>
<span class="t m" style="left:1532.08px;top:1301.33px;font-size:27.5px;color:#7cacf8;">"</span>
<span class="t m" style="left:1548.64px;top:1301.33px;font-size:27.5px;color:#7cacf8;">&gt;</span>
<div class="b" style="left:1569.9px;top:1303.0px;width:35px;height:24.6px;background:#282828;border:2px solid #3b7fae;border-radius:12.3px"></div>
<div class="b" style="left:1577.5000000000002px;top:1313.3999999999999px;width:4.6px;height:4.6px;background:#c4d7f5;border-radius:50%"></div>
<div class="b" style="left:1585.1000000000001px;top:1313.3999999999999px;width:4.6px;height:4.6px;background:#c4d7f5;border-radius:50%"></div>
<div class="b" style="left:1592.7000000000003px;top:1313.3999999999999px;width:4.6px;height:4.6px;background:#c4d7f5;border-radius:50%"></div>
<span class="t m" style="left:1608.40px;top:1301.33px;font-size:27.5px;color:#7cacf8;">&lt;/table&gt;</span>
<svg class="b" style="left:353.5px;top:1347.3px;" width="10" height="18" viewBox="0 0 10 18"><path fill="#c7c7c7" d="M0 0l10 9L0 18z"/></svg>
<span class="t m" style="left:372.70px;top:1341.33px;font-size:27.5px;color:#7cacf8;">&lt;div</span>
<span class="t m" style="left:438.95px;top:1341.33px;font-size:27.5px;color:#7cacf8;"> </span>
<span class="t m" style="left:455.51px;top:1341.33px;font-size:27.5px;color:#a8c7fa;">class</span>
<span class="t m" style="left:538.33px;top:1341.33px;font-size:27.5px;color:#7cacf8;">="</span>
<span class="t m" style="left:571.45px;top:1341.33px;font-size:27.5px;color:#f29766;">tablenav bottom</span>
<span class="t m" style="left:819.89px;top:1341.33px;font-size:27.5px;color:#7cacf8;">"</span>
<span class="t m" style="left:836.45px;top:1341.33px;font-size:27.5px;color:#7cacf8;">&gt;</span>
<div class="b" style="left:857.7125000000001px;top:1343.0px;width:35px;height:24.6px;background:#282828;border:2px solid #3b7fae;border-radius:12.3px"></div>
<div class="b" style="left:865.3125000000001px;top:1353.3999999999999px;width:4.6px;height:4.6px;background:#c4d7f5;border-radius:50%"></div>
<div class="b" style="left:872.9125000000001px;top:1353.3999999999999px;width:4.6px;height:4.6px;background:#c4d7f5;border-radius:50%"></div>
<div class="b" style="left:880.5125000000002px;top:1353.3999999999999px;width:4.6px;height:4.6px;background:#c4d7f5;border-radius:50%"></div>
<span class="t m" style="left:896.21px;top:1341.33px;font-size:27.5px;color:#7cacf8;">&lt;/div&gt;</span>
<span class="t m" style="left:995.59px;top:1341.33px;font-size:27.5px;color:#9fb1c6;"> == </span>
<span class="t m" style="left:1061.84px;top:1341.33px;font-size:27.5px;color:#9fb1c6;font-style:italic;">$0</span>
<div class="b" style="left:8.9px;top:1349.7px;width:5.2px;height:5.2px;background:#dde2ea;border-radius:50%"></div>
<div class="b" style="left:18.2px;top:1349.7px;width:5.2px;height:5.2px;background:#dde2ea;border-radius:50%"></div>
<div class="b" style="left:27.5px;top:1349.7px;width:5.2px;height:5.2px;background:#dde2ea;border-radius:50%"></div>
<span class="t m" style="left:335.30px;top:1381.33px;font-size:27.5px;color:#7cacf8;">&lt;/form&gt;</span>
<svg class="b" style="left:323.5px;top:1427.3px;" width="10" height="18" viewBox="0 0 10 18"><path fill="#c7c7c7" d="M0 0l10 9L0 18z"/></svg>
<span class="t m" style="left:342.70px;top:1421.33px;font-size:27.5px;color:#7cacf8;">&lt;div</span>
<span class="t m" style="left:408.95px;top:1421.33px;font-size:27.5px;color:#7cacf8;"> </span>
<span class="t m" style="left:425.51px;top:1421.33px;font-size:27.5px;color:#a8c7fa;">class</span>
<span class="t m" style="left:508.32px;top:1421.33px;font-size:27.5px;color:#7cacf8;">="</span>
<span class="t m" style="left:541.45px;top:1421.33px;font-size:27.5px;color:#f29766;">form<span class="h">-</span>wrap edit<span class="h">-</span>term<span class="h">-</span>notes</span>
<span class="t m" style="left:955.51px;top:1421.33px;font-size:27.5px;color:#7cacf8;">"</span>
<span class="t m" style="left:972.08px;top:1421.33px;font-size:27.5px;color:#7cacf8;">&gt;</span>
<div class="b" style="left:993.3375000000001px;top:1423.0px;width:35px;height:24.6px;background:#282828;border:2px solid #3b7fae;border-radius:12.3px"></div>
<div class="b" style="left:1000.9375000000001px;top:1433.3999999999999px;width:4.6px;height:4.6px;background:#c4d7f5;border-radius:50%"></div>
<div class="b" style="left:1008.5375000000001px;top:1433.3999999999999px;width:4.6px;height:4.6px;background:#c4d7f5;border-radius:50%"></div>
<div class="b" style="left:1016.1375000000002px;top:1433.3999999999999px;width:4.6px;height:4.6px;background:#c4d7f5;border-radius:50%"></div>
<span class="t m" style="left:1031.84px;top:1421.33px;font-size:27.5px;color:#7cacf8;">&lt;/div&gt;</span>
<span class="t m" style="left:305.30px;top:1461.33px;font-size:27.5px;color:#7cacf8;">&lt;/div&gt;</span>
<span class="t m" style="left:275.30px;top:1501.33px;font-size:27.5px;color:#7cacf8;">&lt;/div&gt;</span>
<span class="t m" style="left:275.30px;top:1541.33px;font-size:27.5px;color:#a3a3a3;">&lt;!<span class="h">-</span><span class="h">-</span> /col<span class="h">-</span>right <span class="h">-</span><span class="h">-</span>&gt;</span>
<span class="t m" style="left:275.30px;top:1581.33px;font-size:27.5px;color:#f28b9d;">::after</span>
<div class="b" style="left:0px;top:1019px;width:2940px;height:66px;background:#3c3c3c;"></div>
<div class="b" style="left:0px;top:1085px;width:2940px;height:2px;background:#5e5e5e;"></div>
<div class="b" style="left:2105px;top:1330px;width:40px;height:40px;background:#b1c8f5;border-radius:9px"></div>
<svg class="b" style="left:2105px;top:1330px;" width="40" height="40" viewBox="2105 1330 40 40"><path d="M2126 1336.900h-9.500a2 2 0 0 0-2 2v18.200a2 2 0 0 0 2 2h3.200l5.700 4.600 5.700-4.600h3.200a2 2 0 0 0 2-2v-6.300" fill="none" stroke="#0d2b66" stroke-width="2.500"/><path fill="#0d2b66" d="M2134 1333.600l1.900 5.400 5.400 1.900-5.400 1.900-1.900 5.400-1.900-5.400-5.400-1.900 5.400-1.900z"/></svg>
<div class="b" style="left:2040.3px;top:1127.4px;width:64px;height:64px;background:#2a2a2a;border-radius:50%;box-shadow:0 2px 8px rgba(0,0,0,.5)"></div>
<svg class="b" style="left:2050px;top:1136px;" width="46" height="46" viewBox="2050 1136 46 46"><circle cx="2072.700" cy="1144.500" r="4.600" fill="#cfcfcf"/><path fill="#cfcfcf" d="M2055.400 1149.300c5.500 1.300 11.300 2 17.300 2s11.800-.700 17.300-2l1 4.200c-3.500.900-7.200 1.500-11 1.800v24.300h-4.600v-12.200h-5.200v12.200h-4.600v-24.300c-3.800-.300-7.500-.900-11-1.800z"/></svg>
<svg class="b" style="left:22px;top:1034px;" width="38" height="38" viewBox="0 0 38 38"><g fill="#c7c7c7"><rect x="8" y="0" width="4" height="4"/><rect x="16" y="0" width="4" height="4"/><rect x="24" y="0" width="4" height="4"/><rect x="0" y="8" width="4" height="4"/><rect x="0" y="16" width="4" height="4"/><rect x="0" y="24" width="4" height="4"/><rect x="32" y="8" width="4" height="4"/><rect x="8" y="32" width="4" height="4"/><path d="M0 4a4 4 0 0 1 4-4v4zM32 0a4 4 0 0 1 4 4h-4zM0 32h4v4a4 4 0 0 1-4-4z"/><path d="M15.500 15.500h20.500v4H22.400l14.200 14.200-2.900 2.900L19.500 22.400V36h-4z"/></g></svg>
<svg class="b" style="left:89px;top:1036px;" width="42" height="32" viewBox="0 0 42 32"><g fill="none" stroke="#c7c7c7" stroke-width="4"><path d="M39 3H12a4 4 0 0 0-4 4v21"/><path d="M1 28.500h20" stroke-width="5"/><rect x="27.800" y="10" width="11.400" height="19.400" rx="3"/></g></svg>
<div class="b" style="left:155px;top:1032px;width:3px;height:40px;background:#646464;"></div>
<span class="t" style="left:189.00px;top:1040.11px;font-size:30px;color:#a8c7fa;letter-spacing:0.786px;-webkit-text-stroke:1.2px;">Elements</span>
<span class="t" style="left:373.60px;top:1040.11px;font-size:30px;color:#c7c7c7;letter-spacing:0.883px;-webkit-text-stroke:1.2px;">Console</span>
<span class="t" style="left:541.00px;top:1040.11px;font-size:30px;color:#c7c7c7;letter-spacing:1.000px;-webkit-text-stroke:1.2px;">Sources</span>
<span class="t" style="left:710.70px;top:1040.11px;font-size:30px;color:#c7c7c7;letter-spacing:1.467px;-webkit-text-stroke:1.2px;">Network</span>
<span class="t" style="left:883.40px;top:1040.11px;font-size:30px;color:#c7c7c7;letter-spacing:1.250px;-webkit-text-stroke:1.2px;">Performance</span>
<span class="t" style="left:1121.00px;top:1040.11px;font-size:30px;color:#c7c7c7;letter-spacing:1.520px;-webkit-text-stroke:1.2px;">Memory</span>
<span class="t" style="left:1290.90px;top:1040.11px;font-size:30px;color:#c7c7c7;letter-spacing:1.470px;-webkit-text-stroke:1.2px;">Application</span>
<span class="t" style="left:1505.70px;top:1040.11px;font-size:30px;color:#c7c7c7;letter-spacing:1.411px;-webkit-text-stroke:1.2px;">Lighthouse</span>
<span class="t" style="left:1718.90px;top:1040.11px;font-size:30px;color:#c7c7c7;letter-spacing:0.943px;-webkit-text-stroke:1.2px;">Recorder</span>
<span class="t" style="left:1926.10px;top:1040.11px;font-size:30px;color:#c7c7c7;letter-spacing:1.050px;-webkit-text-stroke:1.2px;">AdBlock</span>
<span class="t" style="left:2096.00px;top:1040.11px;font-size:30px;color:#c7c7c7;letter-spacing:1.367px;-webkit-text-stroke:1.2px;">Cookie-Editor</span>
<span class="t" style="left:2348.30px;top:1040.11px;font-size:30px;color:#c7c7c7;letter-spacing:0.680px;-webkit-text-stroke:1.2px;">Layers</span>
<div class="b" style="left:163px;top:1081.5px;width:185px;height:5px;background:#a8c7fa;border-radius:6px 6px 0 0"></div>
<svg class="b" style="left:2569.5px;top:1037px;" width="32" height="28" viewBox="0 0 32 28"><path fill="#ee9862" stroke="#ee9862" stroke-width="1.6" stroke-linejoin="round" d="M16 1.600L30.800 26.200H1.200z"/><rect x="14.700" y="10.500" width="2.700" height="8.600" fill="#3c3c3c"/><rect x="14.700" y="21" width="2.700" height="2.800" fill="#3c3c3c"/></svg>
<span class="t" style="left:2605.30px;top:1037.90px;font-size:30px;color:#c7c7c7;-webkit-text-stroke:0.3px;">1</span>
<svg class="b" style="left:2639.8px;top:1038.9px;" width="26.5" height="26.5" viewBox="0 0 26.500 26.500"><path fill="#ee9862" d="M2.500 0h21.500a2.500 2.500 0 0 1 2.500 2.500v16.200a2.500 2.500 0 0 1-2.500 2.500H6.200L0 26.200V2.500A2.500 2.500 0 0 1 2.500 0z"/><rect x="11.900" y="3.800" width="2.700" height="8.600" fill="#3c3c3c"/><rect x="11.900" y="14.400" width="2.700" height="2.800" fill="#3c3c3c"/></svg>
<span class="t" style="left:2670.40px;top:1037.90px;font-size:30px;color:#c7c7c7;-webkit-text-stroke:0.3px;">1</span>
<div class="b" style="left:2707.5px;top:1032px;width:2.5px;height:40px;background:#646464;"></div>
<svg class="b" style="left:2730px;top:1027px;" width="50" height="50" viewBox="2730 1027 50 50"><path d="M2750.90 1040.90L2750.90 1034.70L2759.50 1034.70L2759.50 1040.90L2762.66 1042.73L2768.03 1039.63L2772.33 1047.07L2766.96 1050.18L2766.96 1053.82L2772.33 1056.93L2768.03 1064.37L2762.66 1061.27L2759.50 1063.10L2759.50 1069.30L2750.90 1069.30L2750.90 1063.10L2747.74 1061.27L2742.37 1064.37L2738.07 1056.93L2743.44 1053.82L2743.44 1050.18L2738.07 1047.07L2742.37 1039.63L2747.74 1042.73z" fill="none" stroke="#c7c7c7" stroke-width="3.400" stroke-linejoin="round"/><circle cx="2755.200" cy="1052" r="6.400" fill="#c7c7c7"/></svg>
<div class="b" style="left:2820.6px;top:1036.5px;width:8.4px;height:8.4px;background:#c7c7c7;border-radius:50%"></div>
<div class="b" style="left:2820.6px;top:1047.8999999999999px;width:8.4px;height:8.4px;background:#c7c7c7;border-radius:50%"></div>
<div class="b" style="left:2820.6px;top:1059.1px;width:8.4px;height:8.4px;background:#c7c7c7;border-radius:50%"></div>
<svg class="b" style="left:2880px;top:1039.5px;" width="26" height="26" viewBox="0 0 26 26"><path d="M1.800 1.800l22 22M23.800 1.800L1.800 23.800" stroke="#c7c7c7" stroke-width="3.600" fill="none"/></svg>
<div class="b" style="left:0px;top:1596px;width:2155px;height:2px;background:#5e5e5e;"></div>
<div class="b" style="left:0px;top:1598px;width:2155px;height:56px;background:#282828;"></div>
<div class="b" style="left:1px;top:1598px;width:59px;height:58px;background:#282828;border:2px solid #858585;border-radius:0 0 0 20px"></div>
<svg class="b" style="left:24.6px;top:1617px;" width="11" height="15.2" viewBox="0 0 11 15.200"><path fill="#e0e0e0" d="M11 0v15.200L0 7.600z"/></svg>
<span class="t" style="left:61.00px;top:1612.20px;font-size:30px;color:#a8c7fa;letter-spacing:1.643px;-webkit-text-stroke:0.8px;">#wpbody-content</span>
<span class="t" style="left:349.30px;top:1612.20px;font-size:30px;letter-spacing:0.887px;-webkit-text-stroke:0.8px;"><span style="color:#7cacf8">div</span><span style="color:#a8c7fa">.wrap.nosubsub</span></span>
<span class="t" style="left:647.80px;top:1612.20px;font-size:30px;letter-spacing:1.329px;-webkit-text-stroke:0.8px;"><span style="color:#7cacf8">div</span><span style="color:#e3e3e3">#col-container</span><span style="color:#fdd663">.wp-clearfix</span></span>
<span class="t" style="left:1097.80px;top:1612.20px;font-size:30px;letter-spacing:1.642px;-webkit-text-stroke:0.8px;"><span style="color:#7cacf8">div</span><span style="color:#a8c7fa">#col-right</span></span>
<span class="t" style="left:1315.80px;top:1612.20px;font-size:30px;letter-spacing:1.309px;-webkit-text-stroke:0.8px;"><span style="color:#7cacf8">div</span><span style="color:#a8c7fa">.col-wrap</span></span>
<span class="t" style="left:1524.00px;top:1612.20px;font-size:30px;letter-spacing:1.625px;-webkit-text-stroke:0.8px;"><span style="color:#7cacf8">form</span><span style="color:#a8c7fa">#posts-filter</span></span>
<div class="b" style="left:1783px;top:1598px;width:312px;height:56px;background:#1d4872;"></div>
<span class="t" style="left:1800.30px;top:1612.20px;font-size:30px;letter-spacing:1.094px;-webkit-text-stroke:0.8px;"><span style="color:#7cacf8">div</span><span style="color:#a8c7fa">.tablenav.bottom</span></span>
<div class="b" style="left:2096px;top:1598px;width:59px;height:58px;background:#282828;border:2px solid #5a5a5a"></div>
<svg class="b" style="left:2121.3px;top:1617px;" width="10.7" height="14" viewBox="0 0 10.700 14"><path fill="#8a8a8a" d="M0 0v14l10.700-7z"/></svg>
<div class="b" style="left:2155px;top:1087px;width:2px;height:567px;background:#5e5e5e;"></div>
<div class="b" style="left:2157px;top:1087px;width:783px;height:67px;background:#3c3c3c;"></div>
<div class="b" style="left:2157px;top:1154px;width:783px;height:2px;background:#5e5e5e;"></div>
<span class="t" style="left:2182.50px;top:1107.51px;font-size:30px;color:#a8c7fa;letter-spacing:1.300px;-webkit-text-stroke:1.2px;">Styles</span>
<span class="t" style="left:2322.40px;top:1107.51px;font-size:30px;color:#c7c7c7;letter-spacing:1.629px;-webkit-text-stroke:1.2px;">Computed</span>
<span class="t" style="left:2525.30px;top:1107.51px;font-size:30px;color:#c7c7c7;letter-spacing:0.880px;-webkit-text-stroke:1.2px;">Layout</span>
<svg class="b" style="left:2655px;top:1110px;" width="36" height="28" viewBox="2655 1110 36 28"><path d="M2658.300 1114.800l11 9-11 9M2674.300 1114.800l11 9-11 9" fill="none" stroke="#a0a0a0" stroke-width="3.200"/></svg>
<div class="b" style="left:2157.5px;top:1149px;width:139.5px;height:5px;background:#a8c7fa;border-radius:6px 6px 0 0"></div>
<div class="b" style="left:2157px;top:1156px;width:783px;height:64px;background:#282828;"></div>
<div class="b" style="left:2170px;top:1164px;width:402.5px;height:49px;background:#3a3a3a;border-radius:24.500px"></div>
<svg class="b" style="left:2195px;top:1175px;" width="30" height="28" viewBox="2195 1175 30 28"><path d="M2199.200 1178.900h21.200l-8.600 11v9.200h-4v-9.200z" fill="none" stroke="#c7c7c7" stroke-width="2.800" stroke-linejoin="round"/><rect x="2207.800" y="1190" width="4" height="9" fill="#c7c7c7"/></svg>
<span class="t" style="left:2240.50px;top:1173.40px;font-size:30px;color:#c7c7c7;letter-spacing:0.500px;-webkit-text-stroke:1.2px;">Filter</span>
<span class="t" style="left:2588.60px;top:1173.40px;font-size:30px;color:#c7c7c7;letter-spacing:-0.259px;-webkit-text-stroke:1.2px;transform:scaleX(0.9);transform-origin:0 0;">:hov</span>
<span class="t" style="left:2660.60px;top:1173.40px;font-size:30px;color:#c7c7c7;letter-spacing:2.704px;-webkit-text-stroke:1.2px;transform:scaleX(0.9);transform-origin:0 0;">.cls</span>
<svg class="b" style="left:2735px;top:1165px;" width="185" height="50" viewBox="2735 1165 185 50"><g fill="#c7c7c7">
<rect x="2752.9" y="1172.9" width="4.200" height="30.200"/><rect x="2740" y="1186" width="30" height="4"/>
<path d="M2780.200 1197.500v12.200h-12.500z"/>
<path fill-rule="evenodd" d="M2816 1170.200h23.800v21.700a4 4 0 0 1-4 4h-6v7.500a4.850 4.850 0 0 1-9.700 0v-7.500h-6.200a4 4 0 0 1-4-4v-15.700a6 6 0 0 1 6-6zM2813.900 1177.100a3 3 0 0 1 3-3h7.400v3.400h3.300v-3.400h2.400v7.700h3.700v-7.700h2.100v9.800h-21.900zM2813.900 1188.300h21.900v3.300h-21.900z"/>
<path fill-rule="evenodd" d="M2880.300 1170.200h25.200a5 5 0 0 1 5 5v25.600a5 5 0 0 1-5 5h-25.200a5 5 0 0 1-5-5v-25.600a5 5 0 0 1 5-5zM2879.300 1174.200v27.600h17.600v-27.600zM2900.400 1174.200v27.600h6.100v-27.600z"/>
<path d="M2892 1180v16l-9-8z"/>
</g></svg>
<div class="b" style="left:2157px;top:1220px;width:783px;height:2px;background:#5e5e5e;"></div>
<span class="t m" style="left:2167.10px;top:1230.33px;font-size:27.5px;color:#9a9a9a;">element.style </span>
<span class="t m" style="left:2398.97px;top:1230.33px;font-size:27.5px;color:#e3e3e3;">{</span>
<span class="t m" style="left:2167.10px;top:1270.33px;font-size:27.5px;color:#e3e3e3;">}</span>
<div class="b" style="left:2157px;top:1309px;width:783px;height:2px;background:#5e5e5e;"></div>
<span class="t m" style="left:2167.10px;top:1320.33px;font-size:27.5px;color:#e3e3e3;">.tablenav {</span>
<span class="t m" style="left:2549.06px;top:1323.83px;font-size:27.5px;color:#e3e3e3;">list<span class="h">-</span>tables…093<span class="h">-</span>src:679</span>
<div class="b" style="left:2550.0625px;top:1349.3px;width:378.9375px;height:2.2px;background:#747474;"></div>
<span class="t m" style="left:2212.40px;top:1359.33px;font-size:27.5px;color:#73cbf2;">clear</span>
<span class="t m" style="left:2295.21px;top:1359.33px;font-size:27.5px;color:#e3e3e3;">: </span>
<span class="t m" style="left:2328.34px;top:1359.33px;font-size:27.5px;color:#e3e3e3;">both;</span>
<span class="t m" style="left:2212.40px;top:1394.43px;font-size:27.5px;color:#73cbf2;">height</span>
<span class="t m" style="left:2311.78px;top:1394.43px;font-size:27.5px;color:#e3e3e3;">: </span>
<span class="t m" style="left:2344.90px;top:1394.43px;font-size:27.5px;color:#e3e3e3;">30px;</span>
<span class="t m" style="left:2212.40px;top:1429.53px;font-size:27.5px;color:#73cbf2;">margin</span>
<span class="t m" style="left:2311.78px;top:1429.53px;font-size:27.5px;color:#e3e3e3;">: </span>
<svg class="b" style="left:2343.9px;top:1434.8px;" width="13" height="18" viewBox="0 0 13 18"><path fill="#c7c7c7" d="M0 0l13 9L0 18z"/></svg>
<span class="t m" style="left:2371.73px;top:1429.53px;font-size:27.5px;color:#e3e3e3;">6px 0 4px;</span>
<span class="t m" style="left:2212.40px;top:1464.63px;font-size:27.5px;color:#73cbf2;">padding<span class="h">-</span>top</span>
<span class="t m" style="left:2394.59px;top:1464.63px;font-size:27.5px;color:#e3e3e3;">: </span>
<span class="t m" style="left:2427.71px;top:1464.63px;font-size:27.5px;color:#e3e3e3;">5px;</span>
<span class="t m" style="left:2212.40px;top:1499.73px;font-size:27.5px;color:#73cbf2;">vertical<span class="h">-</span>align</span>
<span class="t m" style="left:2444.28px;top:1499.73px;font-size:27.5px;color:#e3e3e3;">: </span>
<span class="t m" style="left:2477.40px;top:1499.73px;font-size:27.5px;color:#e3e3e3;">middle;</span>
<span class="t m" style="left:2167.10px;top:1534.83px;font-size:27.5px;color:#e3e3e3;">}</span>
<div class="b" style="left:2157px;top:1572.5px;width:783px;height:2px;background:#5e5e5e;"></div>
<span class="t m" style="left:2167.10px;top:1584.33px;font-size:27.5px;color:#9a9a9a;">a, </span>
<span class="t m" style="left:2216.79px;top:1584.33px;font-size:27.5px;color:#e3e3e3;">div {</span>
<span class="t m" style="left:2549.06px;top:1587.83px;font-size:27.5px;color:#e3e3e3;">common.css?…093<span class="h">-</span>src:266</span>
<div class="b" style="left:2550.0625px;top:1613.3px;width:378.9375px;height:2.2px;background:#747474;"></div>
<span class="t m" style="left:2212.40px;top:1623.33px;font-size:27.5px;color:#73cbf2;">outline</span>
<span class="t m" style="left:2328.34px;top:1623.33px;font-size:27.5px;color:#e3e3e3;">: </span>
<svg class="b" style="left:2360.4625px;top:1628.6px;" width="13" height="18" viewBox="0 0 13 18"><path fill="#c7c7c7" d="M0 0l13 9L0 18z"/></svg>
<span class="t m" style="left:2388.29px;top:1623.33px;font-size:27.5px;color:#e3e3e3;">0;</span>
<div class="b" style="left:0;top:-4px;width:2940px;height:1658px;border:2px solid rgba(255,255,255,.22);border-radius:0 0 20px 20px;box-shadow:0 0 0 40px #000;pointer-events:none"></div>
</div>
</body></html>
